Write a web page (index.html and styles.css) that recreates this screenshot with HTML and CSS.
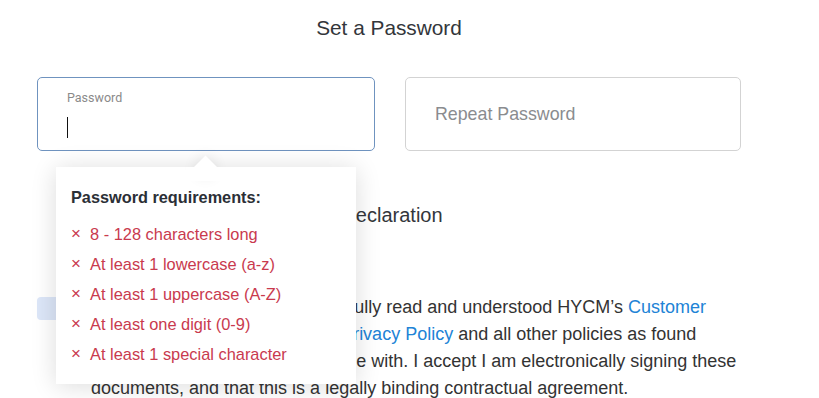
FILE: index.html
```html
<!DOCTYPE html>
<html lang="en">
<head>
<meta charset="utf-8">
<title>Set a Password</title>
<link rel="stylesheet" href="styles.css">
</head>
<body>
<main class="page">
  <h1 class="title">Set a Password</h1>
  <div class="fields">
    <div class="field-wrap">
      <div class="field field-active">
        <span class="field-label">Password</span>
        <span class="caret"></span>
      </div>
      <div class="tooltip">
        <div class="tooltip-title">Password requirements:</div>
        <ul class="req-list">
          <li class="req"><span class="req-x">×</span>8 - 128 characters long</li>
          <li class="req"><span class="req-x">×</span>At least 1 lowercase (a-z)</li>
          <li class="req"><span class="req-x">×</span>At least 1 uppercase (A-Z)</li>
          <li class="req"><span class="req-x">×</span>At least one digit (0-9)</li>
          <li class="req"><span class="req-x">×</span>At least 1 special character</li>
        </ul>
      </div>
    </div>
    <div class="field-wrap">
      <div class="field field-idle">
        <span class="placeholder">Repeat Password</span>
      </div>
    </div>
  </div>
  <h2 class="section-title">Declaration</h2>
  <div class="declaration">
    <span class="check"></span>
    <p class="decl-text">I hereby confirm that I have carefully read and understood HYCM’s <a class="link" href="#">Customer<br>Agreement</a>, <a class="link" href="#">Risks Disclosures</a>, <a class="link" href="#">Privacy Policy</a> and all other policies as found<br>on the HYCM website, and I agree with. I accept I am electronically signing these<br>documents, and that this is a legally binding contractual agreement.</p>
  </div>
</main>
</body>
</html>
```

FILE: styles.css
```css
html, body {
  margin: 0;
  padding: 0;
  background: #ffffff;
}

body {
  font-family: "Liberation Sans", Arial, sans-serif;
  color: #333333;
  overflow: hidden;
}

.page {
  width: 704px;
  padding: 16px 0 0 37px;
}

.title {
  margin: 0;
  font-size: 20.8px;
  font-weight: normal;
  line-height: 24px;
  text-align: center;
  color: #33363b;
}

.fields {
  margin-top: 37px;
  display: grid;
  grid-template-columns: 338px 336px;
  column-gap: 30px;
}

.field-wrap {
  position: relative;
}

.field {
  box-sizing: border-box;
  height: 74px;
  border-radius: 5px;
  background: #ffffff;
}

.field-active {
  border: 1px solid #6f93bf;
  padding: 13px 29px 0;
  display: flex;
  flex-direction: column;
  align-items: flex-start;
}

.field-label {
  font-family: Roboto, "Liberation Sans", sans-serif;
  font-size: 12.5px;
  line-height: 14px;
  color: #8a8a8a;
}

.caret {
  display: block;
  width: 1px;
  height: 21px;
  margin-top: 12px;
  background: #111111;
}

.field-idle {
  border: 1px solid #d3d3d3;
  padding: 0 29px;
  display: flex;
  align-items: center;
}

.placeholder {
  font-size: 17.8px;
  color: #8a8c8f;
}

.tooltip {
  position: absolute;
  left: 19px;
  top: 90px;
  z-index: 5;
  box-sizing: border-box;
  width: 300px;
  height: 217px;
  padding: 20px 15px 15px;
  background: #ffffff;
  box-shadow: 0 2px 24px rgba(0, 0, 0, 0.14);
}

.tooltip::before {
  content: "";
  position: absolute;
  left: 141px;
  top: -8px;
  width: 17px;
  height: 17px;
  background: #ffffff;
  transform: rotate(45deg);
  box-shadow: 0 0 14px rgba(0, 0, 0, 0.1);
}

.tooltip::after {
  content: "";
  position: absolute;
  left: 130px;
  top: 0;
  width: 40px;
  height: 14px;
  background: #ffffff;
}

.tooltip-title {
  position: relative;
  z-index: 1;
  font-size: 16.3px;
  font-weight: bold;
  line-height: 20px;
  color: #2b2f36;
}

.req-list {
  list-style: none;
  margin: 12px 0 0;
  padding: 0;
}

.req {
  font-size: 16.4px;
  line-height: 30px;
  color: #c93a4e;
  display: flex;
  align-items: center;
}

.req-x {
  width: 19px;
  font-size: 17px;
}

.section-title {
  margin: 52px 0 0;
  padding-left: 6px;
  font-size: 20px;
  font-weight: normal;
  line-height: 24px;
  text-align: center;
  color: #33363b;
}

.declaration {
  margin-top: 67px;
  display: flex;
  align-items: flex-start;
  column-gap: 14px;
}

.check {
  flex: none;
  width: 40px;
  height: 23px;
  margin-top: 3px;
  border-radius: 4px;
  background: #dce6f8;
}

.decl-text {
  margin: 0;
  font-size: 18px;
  line-height: 27px;
  color: #333333;
  white-space: nowrap;
}

.link {
  color: #2183d6;
  text-decoration: none;
}
```
